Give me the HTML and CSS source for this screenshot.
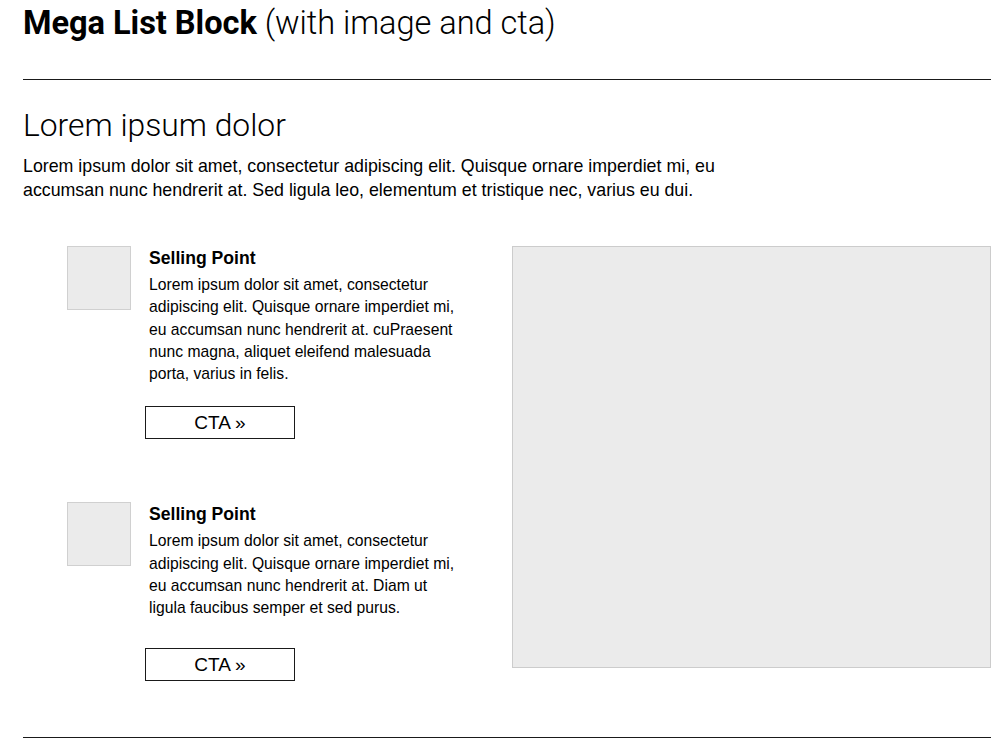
FILE: index.html
```html
<!DOCTYPE html>
<html lang="en">
<head>
<meta charset="utf-8">
<title>Mega List Block</title>
<link rel="stylesheet" href="styles.css">
</head>
<body>
<div class="page">
  <h1 class="page-title"><strong>Mega List Block</strong> (with image and cta)</h1>
  <hr class="rule rule-top">
  <section class="block">
    <h2 class="block-title">Lorem ipsum dolor</h2>
    <p class="block-intro">Lorem ipsum dolor sit amet, consectetur adipiscing elit. Quisque ornare imperdiet mi, eu accumsan nunc hendrerit at. Sed ligula leo, elementum et tristique nec, varius eu dui.</p>
    <div class="block-body">
      <div class="list">
        <div class="item">
          <div class="item-icon"></div>
          <div class="item-content">
            <h3 class="item-title">Selling Point</h3>
            <p class="item-text">Lorem ipsum dolor sit amet, consectetur adipiscing elit. Quisque ornare imperdiet mi, eu accumsan nunc hendrerit at. cuPraesent nunc magna, aliquet eleifend malesuada porta, varius in felis.</p>
            <a class="cta" href="#">CTA »</a>
          </div>
        </div>
        <div class="item">
          <div class="item-icon"></div>
          <div class="item-content">
            <h3 class="item-title">Selling Point</h3>
            <p class="item-text">Lorem ipsum dolor sit amet, consectetur adipiscing elit. Quisque ornare imperdiet mi, eu accumsan nunc hendrerit at. Diam ut ligula faucibus semper et sed purus.</p>
            <a class="cta" href="#">CTA »</a>
          </div>
        </div>
      </div>
      <div class="media"></div>
    </div>
  </section>
  <hr class="rule rule-bottom">
</div>
</body>
</html>
```

FILE: styles.css
```css
html, body {
  margin: 0;
  padding: 0;
  background: #ffffff;
  color: #000000;
}

.page {
  width: 968px;
  padding: 0 0 0 23px;
  font-family: "Liberation Sans", Arial, sans-serif;
}

.page-title {
  margin: 0;
  padding-top: 5px;
  font-family: Roboto, "Liberation Sans", sans-serif;
  font-size: 32.6px;
  line-height: 36px;
  font-weight: 300;
  letter-spacing: -0.05px;
}

.page-title strong {
  font-weight: 700;
}

.rule {
  border: 0;
  height: 0;
  margin: 0;
  border-top: 1.5px solid #1a1a1a;
}

.rule-top {
  margin-top: 38px;
}

.block-title {
  margin: 25px 0 0 0;
  font-family: Roboto, "Liberation Sans", sans-serif;
  font-weight: 300;
  font-size: 31.8px;
  line-height: 40px;
}

.block-intro {
  margin: 9px 0 0 0;
  font-size: 17.8px;
  line-height: 24px;
  width: 740px;
}

.block-body {
  display: flex;
  justify-content: space-between;
  margin-top: 44px;
}

.list {
  display: flex;
  flex-direction: column;
  gap: 63px;
  padding-left: 44px;
  width: 400px;
}

.item {
  display: flex;
  gap: 18px;
}

.item-icon {
  flex: 0 0 auto;
  width: 62px;
  height: 62px;
  background: #ebebeb;
  border: 1px solid #d0d0d0;
}

.item-content {
  display: flex;
  flex-direction: column;
  align-items: flex-start;
}

.item-title {
  margin: 2px 0 0 0;
  font-size: 17.6px;
  line-height: 20px;
  font-weight: 700;
}

.item-text {
  margin: 6px 0 0 0;
  font-size: 15.7px;
  line-height: 22.25px;
  width: 316px;
  min-height: 97px;
}

.cta {
  display: flex;
  align-items: center;
  justify-content: center;
  box-sizing: border-box;
  width: 150px;
  height: 33px;
  margin: 21px 0 0 -4px;
  border: 1.5px solid #1a1a1a;
  color: #000;
  text-decoration: none;
  font-size: 19px;
}

.media {
  box-sizing: border-box;
  width: 479px;
  height: 422px;
  background: #ebebeb;
  border: 1px solid #cccccc;
}

.rule-bottom {
  margin-top: 56px;
}
```
